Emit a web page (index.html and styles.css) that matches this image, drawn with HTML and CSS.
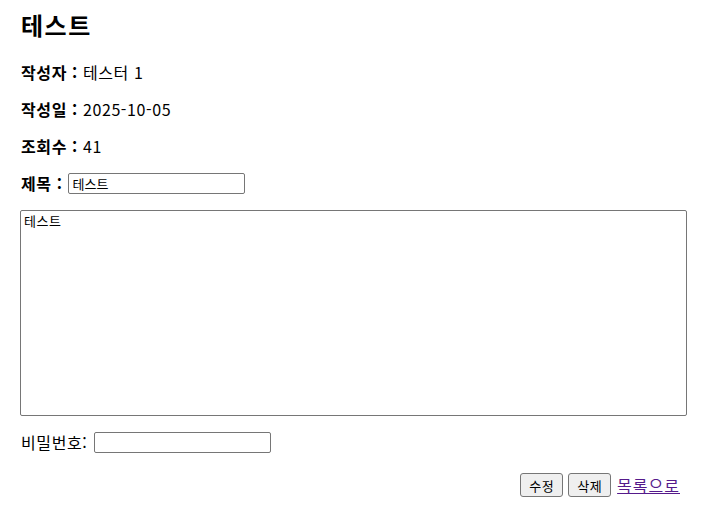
FILE: index.html
```html
<!DOCTYPE html>
<html lang="ko">
<head>
  <meta charset="UTF-8" />
  <title>테스트</title>
  <link rel="stylesheet" href="styles.css">
</head>
<body>
  <div class="post">
    <h2>테스트</h2>

    <p><b>작성자 :</b> 테스터 1</p>
    <p><b>작성일 :</b> 2025-10-05</p>
    <p><b>조회수 :</b> 41</p>

    <form class="edit-form" onsubmit="return false;">
      <p><b>제목 :</b> <input type="text" class="title-input" value="테스트" /></p>
      <textarea class="content-input">테스트</textarea>
      <p>비밀번호: <input type="password" class="pw-input" /></p>
      <div class="actions">
        <button type="button">수정</button>
        <button type="button">삭제</button>
        <a href="#" class="list-link">목록으로</a>
      </div>
    </form>
  </div>
</body>
</html>
```

FILE: styles.css
```css
body {
  margin: 0;
  font-family: "Noto Sans CJK KR", "Noto Sans", sans-serif;
  font-size: 16px;
  color: #000;
  background: #fff;
}

.post {
  width: 660px;
  margin-left: 20px;
}

h2 {
  font-size: 24px;
  line-height: 32px;
  margin: 9px 0 21px 1px;
  letter-spacing: 1.5px;
}

p {
  margin: 16px 0 16px 1px;
  line-height: 21px;
  height: 21px;
  display: flex;
  align-items: center;
  white-space: pre;
  letter-spacing: 0.6px;
}

input {
  box-sizing: border-box;
  width: 177px;
  height: 21px;
  border: 1px solid #767676;
  border-radius: 2px;
  padding: 1px 4px;
  font-family: "Noto Sans CJK KR", sans-serif;
  font-size: 13px;
  letter-spacing: 0;
  margin: 0;
}

.title-input {
  margin-left: 5px;
}

.pw-input {
  margin-left: 2px;
}

.content-input {
  display: block;
  box-sizing: border-box;
  width: 667px;
  height: 206px;
  margin: 0;
  padding: 2px 3px;
  border: 1px solid #767676;
  border-radius: 2px;
  font-family: "Noto Sans CJK KR", monospace;
  font-size: 13px;
  line-height: 16px;
  letter-spacing: 0.5px;
  resize: none;
}

.actions {
  display: flex;
  justify-content: flex-end;
  align-items: center;
  margin-top: 20px;
}

button {
  height: 24px;
  padding: 0 8px;
  margin-right: 5px;
  font-family: "Noto Sans CJK KR", sans-serif;
  font-size: 13px;
  letter-spacing: 0.5px;
  background: #efefef;
  border: 1px solid #767676;
  border-radius: 3px;
  color: #000;
}

.list-link {
  color: #551a8b;
  font-size: 16px;
  letter-spacing: 1px;
  margin-left: 1px;
}
```
